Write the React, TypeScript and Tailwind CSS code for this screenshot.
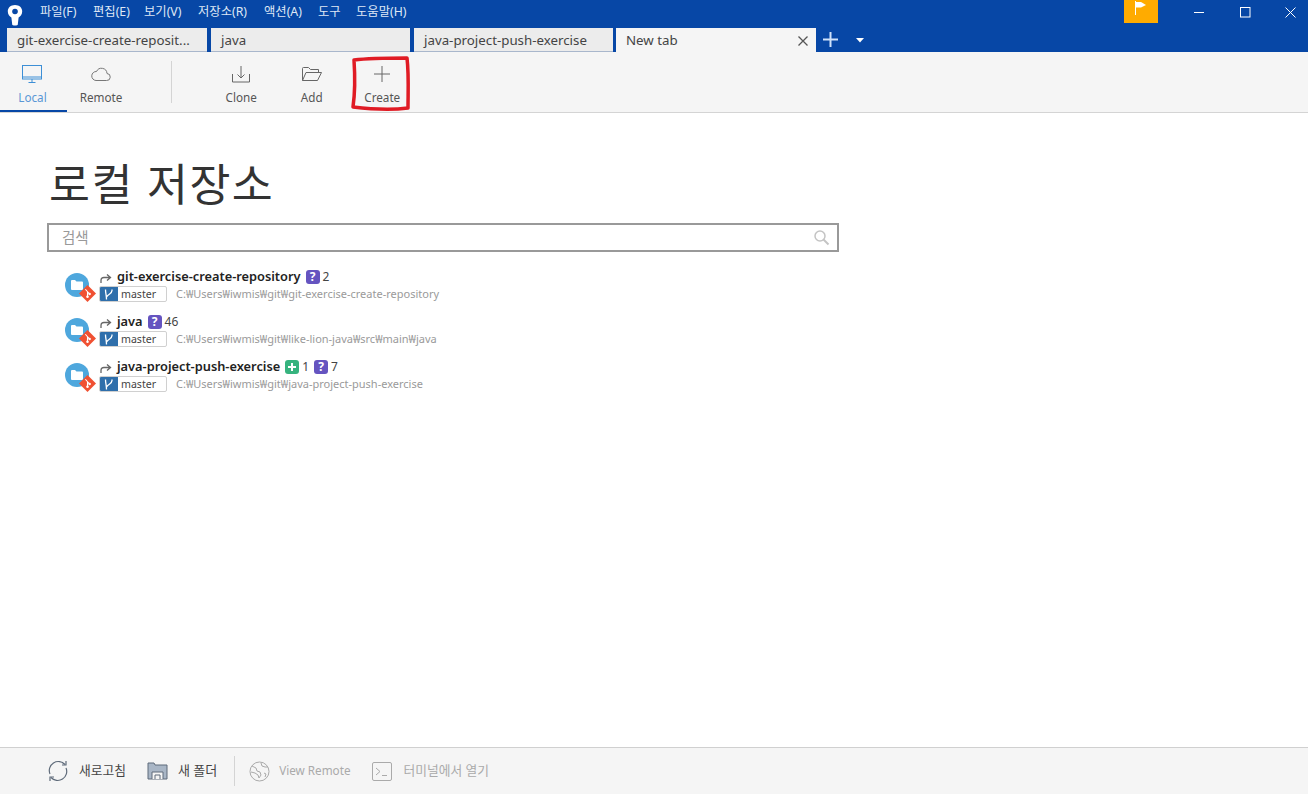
import { ReactNode } from 'react'

const font = { fontFamily: '"Noto Sans", "Noto Sans CJK KR", sans-serif' }

const menus = [
  { label: '파일(F)', w: 'w-[39px]' },
  { label: '편집(E)', w: 'w-[37px]' },
  { label: '보기(V)', w: 'w-[40px]' },
  { label: '저장소(R)', w: 'w-[52px]' },
  { label: '액션(A)', w: 'w-[40px]' },
  { label: '도구', w: 'w-[24px]' },
  { label: '도움말(H)', w: 'w-[53px]' },
]

const repos = [
  { name: 'git-exercise-create-repository', path: 'C:₩Users₩iwmis₩git₩git-exercise-create-repository', added: 0, unknown: 2 },
  { name: 'java', path: 'C:₩Users₩iwmis₩git₩like-lion-java₩src₩main₩java', added: 0, unknown: 46 },
  { name: 'java-project-push-exercise', path: 'C:₩Users₩iwmis₩git₩java-project-push-exercise', added: 1, unknown: 7 },
]

function Logo() {
  return (
    <svg width="16" height="22" viewBox="0 0 16 22">
      <path d="M8 1C3.600 1 .8 3.800.8 7.400c0 3 1.800 5 3.600 6l.8 7c0 .6 1.200 1 2.800 1s2.800-.4 2.800-1l.8-7c1.800-1 3.600-3 3.600-6C15.200 3.800 12.400 1 8 1z" fill="#fff" />
      <circle cx="8" cy="7.500" r="2.800" fill="#0747a6" />
    </svg>
  )
}

function Tab({ label, className }: { label: string; className: string }) {
  return (
    <div className={`h-[24px] bg-[#ececec] border-b border-[#a9b7cc] pl-[10px] text-[13.300px] leading-[24px] text-[#444] ${className}`}>
      {label}
    </div>
  )
}

function ToolButton({ icon, label }: { icon: ReactNode; label: string }) {
  return (
    <div className="w-[70.500px] h-full flex flex-col items-center">
      <div className="h-[24px] mt-[10px] flex items-center justify-center">{icon}</div>
      <div className="mt-[2px] text-[11.700px] leading-[18px] text-[#555]">{label}</div>
    </div>
  )
}

function Badge({ kind }: { kind: 'added' | 'unknown' }) {
  return (
    <span className={`w-[14px] h-[14px] rounded-[3px] flex items-center justify-center text-white font-bold text-[12px] leading-none ${kind === 'added' ? 'bg-[#36b37e]' : 'bg-[#6554c0]'}`}>
      {kind === 'added' ? (
        <svg width="10" height="10" viewBox="0 0 10 10"><path d="M5 1v8M1 5h8" stroke="#fff" strokeWidth="2" /></svg>
      ) : '?'}
    </span>
  )
}

function RepoRow({ repo }: { repo: (typeof repos)[number] }) {
  return (
    <div className="h-[45px] flex items-start">
      <div className="relative w-[34px] h-[36px] ml-[18px] mt-[10px] shrink-0">
        <div className="absolute left-0 top-0 w-[24px] h-[24px] rounded-full bg-[#4ea7dd] flex items-center justify-center">
          <svg width="12" height="10" viewBox="0 0 12 10"><path d="M0 1q0-1 1-1h3l1.500 1.500H11q1 0 1 1V9q0 1-1 1H1q-1 0-1-1z" fill="#fff" /></svg>
        </div>
        <svg className="absolute left-[14px] top-[12px]" width="17" height="17" viewBox="0 0 16 16">
          <path d="M8 0l8 8-8 8-8-8z" fill="#f05133" />
          <path d="M6 4l4 4.500M8 6.500v4" stroke="#fff" strokeWidth="1" fill="none" />
          <circle cx="8" cy="11" r="1.200" fill="#fff" />
          <circle cx="10" cy="8.500" r="1.200" fill="#fff" />
        </svg>
      </div>
      <div className="ml-[1px]">
        <div className="flex items-center h-[22px] mt-[3px]">
          <svg className="mr-[5px] mt-[3px]" width="12" height="11" viewBox="0 0 12 11">
            <path d="M1 10V7.500Q1 4.500 4 4.500H9.500M7 1.500l3.500 3-3.500 3" stroke="#666" strokeWidth="1.300" fill="none" />
          </svg>
          <span className="text-[12.800px] font-semibold text-[#222]">{repo.name}</span>
          {repo.added > 0 && (
            <>
              <span className="ml-[5px]"><Badge kind="added" /></span>
              <span className="ml-[3px] text-[12px] text-[#444]">{repo.added}</span>
            </>
          )}
          <span className="ml-[5px]"><Badge kind="unknown" /></span>
          <span className="ml-[3px] text-[12px] text-[#444]">{repo.unknown}</span>
        </div>
        <div className="flex items-center h-[16px] -mt-[2px] -ml-[1px]">
          <div className="w-[68px] h-[16px] flex rounded-[2px] border border-[#d0d0d0] overflow-hidden">
            <div className="w-[19px] bg-[#2f6fab] flex items-center justify-center -my-px -ml-px">
              <svg width="11" height="13" viewBox="0 0 11 13" fill="none" stroke="#fff" strokeWidth="1.300">
                <path d="M2.500 1.500c0 3.500 1 6 1 10M9 1.500v1C9 6 5 6 3.600 9" />
              </svg>
            </div>
            <span className="ml-[3px] text-[10.600px] leading-[14px] text-[#444]">master</span>
          </div>
          <span className="ml-[9px] text-[11px] leading-[16px] text-[#9a9a9a]">{repo.path}</span>
        </div>
      </div>
    </div>
  )
}

function FooterAction({ icon, label, textClass, className }: { icon: ReactNode; label: string; textClass: string; className?: string }) {
  return (
    <div className={`flex items-center ${className ?? ''}`}>
      {icon}
      <span className={textClass}>{label}</span>
    </div>
  )
}

export default function App() {
  return (
    <div className="relative w-[1308px] h-[794px] flex flex-col bg-white overflow-hidden" style={font}>
      <div className="h-[52px] bg-[#0747a6] shrink-0 relative">
        <div className="h-[28px] flex items-center text-white">
          <div className="w-[40px] pl-[7px] pt-[1px]"><Logo /></div>
          <div className="flex gap-[14px] text-[12.300px] leading-[16px] -mt-[5px] text-[#dfe8f5]">
            {menus.map((m) => (
              <span key={m.label} className={`${m.w} whitespace-nowrap`}>{m.label}</span>
            ))}
          </div>
          <div className="ml-auto flex items-start h-full">
            <div className="w-[34px] h-[23px] bg-[#ffab00] flex items-start justify-center pt-[1px]">
              <svg width="14" height="14" viewBox="0 0 14 14">
                <path d="M1.500 0v14" stroke="#fff" />
                <path d="M2 1h5l5 3-5 2.500H2z" fill="#fff" />
              </svg>
            </div>
            <div className="ml-[19px] w-[44px] h-[24px] flex items-center justify-center">
              <svg width="11" height="11" viewBox="0 0 11 11"><path d="M0 5.500h10" stroke="#fff" /></svg>
            </div>
            <div className="ml-[2px] w-[44px] h-[24px] flex items-center justify-center">
              <svg width="11" height="11" viewBox="0 0 11 11"><rect x=".5" y=".5" width="9.500" height="9.500" fill="none" stroke="#fff" /></svg>
            </div>
            <div className="ml-[5px] w-[36px] h-[24px] flex items-center justify-center">
              <svg width="11" height="11" viewBox="0 0 11 11"><path d="M.5.500l10 10M10.500.500l-10 10" stroke="#fff" /></svg>
            </div>
          </div>
        </div>
        <div className="h-[24px] flex items-start pl-[7px]">
          <Tab label="git-exercise-create-reposit..." className="w-[200px]" />
          <Tab label="java" className="w-[199px] ml-[4px]" />
          <Tab label="java-project-push-exercise" className="w-[199px] ml-[4px]" />
          <div className="w-[200px] ml-[3px] h-[24px] bg-[#f5f5f5] pl-[10px] pr-[7px] pt-[1px] flex items-center justify-between text-[13.300px] text-[#444]">
            <span>New tab</span>
            <svg width="12" height="12" viewBox="0 0 12 12"><path d="M1.500 1.500l9 9M10.500 1.500l-9 9" stroke="#555" strokeWidth="1.300" /></svg>
          </div>
          <svg className="ml-[7px] mt-[4px]" width="15" height="15" viewBox="0 0 15 15"><path d="M7.500 0v15M0 7.500h15" stroke="#cfe2fa" strokeWidth="2" /></svg>
          <svg className="ml-[18px] mt-[10px]" width="8" height="5" viewBox="0 0 8 5"><path d="M0 0h8L4 4.500z" fill="#fff" /></svg>
        </div>
      </div>

      <div className="h-[61px] shrink-0 bg-[#f5f5f5] border-b border-[#d4d4d4] flex">
        <div className="w-[67px] h-[60px] border-b-2 border-[#0747a6] flex flex-col items-center">
          <svg className="mt-[12px] -ml-[2px]" width="21" height="20" viewBox="0 0 21 20" fill="none" stroke="#3d8fd6">
            <rect x=".5" y="1.500" width="19" height="13.500" />
            <path d="M.5 13h19M6.500 18.500h7M10 15v3.500" />
          </svg>
          <div className="mt-[4px] -ml-[2px] text-[11.700px] leading-[18px] text-[#5a97d6]">Local</div>
        </div>
        <div className="w-[68px] flex flex-col items-center">
          <svg className="mt-[13px]" width="20" height="20" viewBox="0 0 20 20" fill="none" stroke="#777">
            <path d="M5 15.500h10.500a3.500 3.500 0 0 0 .5-7 5.500 5.500 0 0 0-10.500-2A4.500 4.500 0 0 0 5 15.500z" />
          </svg>
          <div className="mt-[3px] text-[11.700px] leading-[18px] text-[#555]">Remote</div>
        </div>
        <div className="ml-[36px] mt-[9px] w-px h-[42px] bg-[#d4d4d4]" />
        <div className="ml-[34px] flex">
          <ToolButton
            label="Clone"
            icon={
              <svg width="20" height="20" viewBox="0 0 20 20" fill="none" stroke="#666">
                <path d="M1.500 10v8h17v-8M10 2v12M6.500 10.500 10 14l3.500-3.500" />
              </svg>
            }
          />
          <ToolButton
            label="Add"
            icon={
              <svg width="22" height="18" viewBox="0 0 22 18" fill="none" stroke="#666">
                <path d="M1.500 15.500v-12q0-1 1-1h5l2 2h8v3M1.500 15.500h15l4-8H5z" />
              </svg>
            }
          />
          <ToolButton
            label="Create"
            icon={
              <svg width="16" height="16" viewBox="0 0 16 16" fill="none" stroke="#666">
                <path d="M8 0v16M0 8h16" />
              </svg>
            }
          />
        </div>
      </div>

      <div className="flex-1 pl-[47px]">
        <h1 className="mt-[44px] ml-[2px] text-[44.500px] leading-[54px] tracking-[1.500px] text-[#333]">로컬 저장소</h1>
        <div className="mt-[12px] w-[792px] h-[29px] border-2 border-[#999] flex items-center justify-between pl-[13px] pr-[7px]">
          <span className="text-[14.500px] text-[#999]">검색</span>
          <svg width="17" height="17" viewBox="0 0 17 17" fill="none" stroke="#c4c4c4" strokeWidth="1.500">
            <circle cx="7" cy="7" r="5" />
            <path d="M10.500 10.500l5 5" strokeWidth="2" />
          </svg>
        </div>
        <div className="mt-[11px]">
          {repos.map((repo) => (
            <RepoRow key={repo.name} repo={repo} />
          ))}
        </div>
      </div>

      <div className="h-[47px] shrink-0 bg-[#f5f5f5] border-t border-[#d0d0d0] flex items-center pl-[47px]">
        <FooterAction
          label="새로고침"
          textClass="text-[12.750px] text-[#444]"
          icon={
            <svg className="mr-[10px]" width="22" height="22" viewBox="0 0 22 22" fill="none" stroke="#5f6b7a" strokeWidth="1.200">
              <path d="M3 14A9 9 0 0 1 18 4.500M19 8A9 9 0 0 1 4 17.500" />
              <path d="M19 1v4h-4M3 21v-4h4" />
            </svg>
          }
        />
        <FooterAction
          className="ml-[21px]"
          label="새 폴더"
          textClass="text-[13px] text-[#444]"
          icon={
            <svg className="mr-[10px]" width="21" height="20" viewBox="0 0 21 20">
              <path d="M1 2h6l1 2h12v14H1z" fill="#a9b6c6" stroke="#5f6b7a" />
              <path d="M5 18v-7h11v7M8 18v-4h5v4" fill="#f5f5f5" stroke="#5f6b7a" />
            </svg>
          }
        />
        <div className="ml-[17px] w-px h-[30px] bg-[#d4d4d4]" />
        <FooterAction
          className="ml-[14px]"
          label="View Remote"
          textClass="text-[11.700px] text-[#aaa]"
          icon={
            <svg className="mr-[9px]" width="21" height="21" viewBox="0 0 21 21" fill="none" stroke="#aaa">
              <circle cx="10.500" cy="10.500" r="9.500" />
              <path d="M3 5l4 2 1 3 3 1 1 3-2 3-1-3-3-2-4-1M12 2l1 3 3 1 3 0M15 12l2 1-1 3" />
            </svg>
          }
        />
        <FooterAction
          className="ml-[22px]"
          label="터미널에서 열기"
          textClass="text-[12.750px] text-[#aaa]"
          icon={
            <svg className="mr-[11px]" width="20" height="19" viewBox="0 0 20 19" fill="none" stroke="#aaa">
              <rect x=".5" y=".5" width="19" height="18" rx="1.500" />
              <path d="M4 6l4 3.500L4 13M10 13.500h5" />
            </svg>
          }
        />
      </div>

      <svg className="absolute left-[350px] top-[55px] pointer-events-none" width="62" height="58" viewBox="0 0 62 58" fill="none">
        <path d="M4 5C20 3 42 3 57 3C59 20 58 38 58 53C42 55 20 54 3 52C5 38 5 20 4 5Z" stroke="#e01b24" strokeWidth="3.500" strokeLinejoin="round" />
      </svg>
    </div>
  )
}
